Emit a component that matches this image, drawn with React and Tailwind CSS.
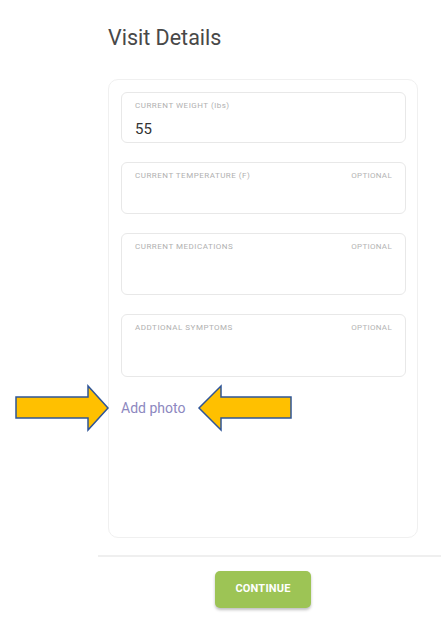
import React from 'react';

const fields = [
  { label: 'CURRENT WEIGHT (lbs)', value: '55', h: 'h-[51px]' },
  { label: 'CURRENT TEMPERATURE (F)', optional: true, h: 'h-[52px]' },
  { label: 'CURRENT MEDICATIONS', optional: true, h: 'h-[62px]' },
  { label: 'ADDTIONAL SYMPTOMS', optional: true, h: 'h-[63px]' },
];

function Field({ label, value, optional, h }) {
  return (
    <div className={`${h} w-[285px] rounded-[6px] border border-[#e8e8e8] bg-white px-[13px] pt-[8px]`}>
      <div className="flex items-start justify-between">
        <span className="text-[8px] leading-[10px] tracking-[0.5px] text-[#b0b0b0]">{label}</span>
        {optional && (
          <span className="text-[8px] leading-[10px] tracking-[0.3px] text-[#b4b4b4]">OPTIONAL</span>
        )}
      </div>
      {value && (
        <div className="mt-[9px] text-[15px] leading-[18px] text-[#333]">{value}</div>
      )}
    </div>
  );
}

// Annotation arrows pointing at the "Add photo" link
function Arrows() {
  return (
    <svg className="absolute left-0 top-0 pointer-events-none" width="441" height="620">
      <polygon
        points="16,397 88,397 88,386 108,408 88,430 88,418 16,418"
        fill="#ffc000"
        stroke="#2f5597"
        strokeWidth="1.5"
        strokeLinejoin="miter"
      />
      <polygon
        points="291,397 221,397 221,386 199,408 221,430 221,418 291,418"
        fill="#ffc000"
        stroke="#2f5597"
        strokeWidth="1.5"
        strokeLinejoin="miter"
      />
    </svg>
  );
}

export default function App() {
  return (
    <div className="relative h-[620px] w-[441px] overflow-hidden bg-white font-['Roboto','Liberation_Sans',sans-serif]">
      <div className="pl-[98px]">
        <h1 className="pl-[10px] pt-[25px] text-[21.5px] leading-[26px] font-normal text-[#484848]">
          Visit Details
        </h1>

        <div className="ml-[10px] mt-[28px] h-[459px] w-[310px] rounded-[10px] border border-[#f0f0f0] px-[12px] pt-[12px]">
          <div className="flex flex-col gap-[19px]">
            {fields.map((f) => (
              <Field key={f.label} {...f} />
            ))}
          </div>
          <button className="mt-[22px] text-[14px] leading-[18px] text-[#8d88c0]">
            Add photo
          </button>
        </div>

        <div className="mt-[17px] h-[2px] w-full bg-[#efefef]" />

        <div className="flex pl-[117px] pt-[14px]">
          <button className="h-[37px] w-[96px] rounded-[5px] bg-[#9dc455] text-[11px] font-bold tracking-[0.2px] text-white shadow-[0_2px_3px_rgba(0,0,0,0.25)]">
            CONTINUE
          </button>
        </div>
      </div>
      <Arrows />
    </div>
  );
}
